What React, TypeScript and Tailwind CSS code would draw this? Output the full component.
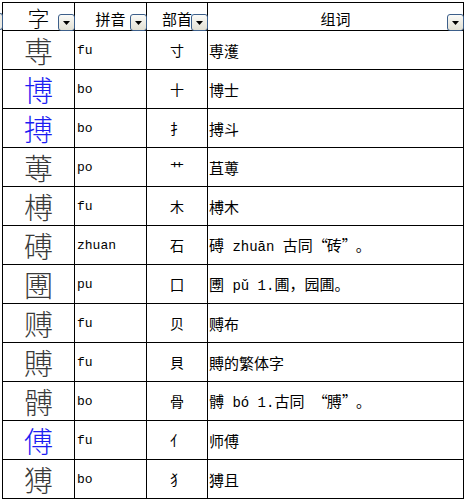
import React from "react";

const CJK = "font-['Noto_Sans_CJK_SC',sans-serif]";
const MONO = "font-['Liberation_Mono','Noto_Sans_CJK_SC',monospace]";

type Row = {
  ch: string;
  blue?: boolean;
  py: string;
  rad: string;
  words: React.ReactNode;
};

const P = ({ children }: { children: React.ReactNode }) => (
  <span className={`${MONO} text-[14px] whitespace-pre`}>{children}</span>
);
const LQ = () => <span className="inline-block w-[14px] text-left">“</span>;
const RQ = () => <span className="inline-block w-[14px] text-right">”</span>;

const rows: Row[] = [
  { ch: "尃", py: "fu", rad: "寸", words: "尃濩" },
  { ch: "博", blue: true, py: "bo", rad: "十", words: "博士" },
  { ch: "搏", blue: true, py: "bo", rad: "扌", words: "搏斗" },
  { ch: "蒪", py: "po", rad: "艹", words: "苴蒪" },
  { ch: "榑", py: "fu", rad: "木", words: "榑木" },
  {
    ch: "磗",
    py: "zhuan",
    rad: "石",
    words: (
      <>
        磗<P>{" zhuān "}</P>古同<LQ />砖<RQ />。
      </>
    ),
  },
  {
    ch: "圑",
    py: "pu",
    rad: "囗",
    words: (
      <>
        圑<P>{" pǔ 1."}</P>圃，园圃。
      </>
    ),
  },
  { ch: "赙", py: "fu", rad: "贝", words: "赙布" },
  { ch: "賻", py: "fu", rad: "貝", words: "賻的繁体字" },
  {
    ch: "髆",
    py: "bo",
    rad: "骨",
    words: (
      <>
        髆<P>{" bó 1."}</P>古同<P>{" "}</P>
        <LQ />膊<RQ />。
      </>
    ),
  },
  { ch: "傅", blue: true, py: "fu", rad: "亻", words: "师傅" },
  { ch: "猼", py: "bo", rad: "犭", words: "猼且" },
];

function DropBtn() {
  return (
    <div className="absolute right-[-1px] bottom-[-1px] w-[17px] h-[17px] rounded-[3px] border border-[#3d5f8a] bg-gradient-to-b from-[#fbfbf8] to-[#e2e0d4] flex items-center justify-center">
      <svg width="8" height="5" viewBox="0 0 8 5" className="mt-[2px]">
        <polygon points="0,0 7,0 3.5,4" fill="#000" />
      </svg>
    </div>
  );
}

export default function App() {
  return (
    <div className="relative bg-white w-[465px] h-[500px] pl-[2px] pt-[2px]">
      {/* sliver of previous column's button */}
      <div className="absolute left-0 top-[13px] w-[3px] h-[17px] rounded-r-[3px] border-r border-y border-[#3d5f8a] bg-[#eeede6]" />
      <div className="border-l border-t border-black w-[462px]">
        {/* header */}
        <div className="flex h-[28px]">
          <div className="relative w-[72px] border-r border-b border-black flex items-center justify-center">
            <span className={`${CJK} text-[22px] leading-[22px] text-black font-light`}>字</span>
            <DropBtn />
          </div>
          <div className="relative w-[72px] border-r border-b border-black flex items-center justify-center">
            <span className={`${CJK} text-[15px] leading-none text-black mt-[3px]`}>拼音</span>
            <DropBtn />
          </div>
          <div className="relative w-[61px] border-r border-b border-black flex items-center justify-center">
            <span className={`${CJK} text-[15px] leading-none text-black mt-[3px]`}>部首</span>
            <DropBtn />
          </div>
          <div className="relative w-[256px] border-r border-b border-black flex items-center justify-center">
            <span className={`${CJK} text-[15px] leading-none text-black mt-[3px]`}>组词</span>
            <DropBtn />
          </div>
        </div>
        {rows.map((r, i) => (
          <div key={i} className="flex h-[39px]">
            <div className="w-[72px] border-r border-b border-black flex items-center justify-center">
              <span
                className={`${CJK} text-[29px] leading-[30px] font-light ${
                  r.blue ? "text-[#1c1cf2]" : "text-[#3a3a3a]"
                }`}
              >
                {r.ch}
              </span>
            </div>
            <div className="w-[72px] border-r border-b border-black flex items-center pl-[2px]">
              <span className={`${MONO} text-[13px] leading-none text-black`}>{r.py}</span>
            </div>
            <div className="w-[61px] border-r border-b border-black flex items-center justify-center">
              <span className={`${CJK} text-[14px] leading-none text-black`}>{r.rad}</span>
            </div>
            <div className="w-[256px] border-r border-b border-black flex items-center pl-[1px]">
              <span className={`${CJK} text-[15px] leading-none text-black whitespace-pre`}>{r.words}</span>
            </div>
          </div>
        ))}
      </div>
    </div>
  );
}
